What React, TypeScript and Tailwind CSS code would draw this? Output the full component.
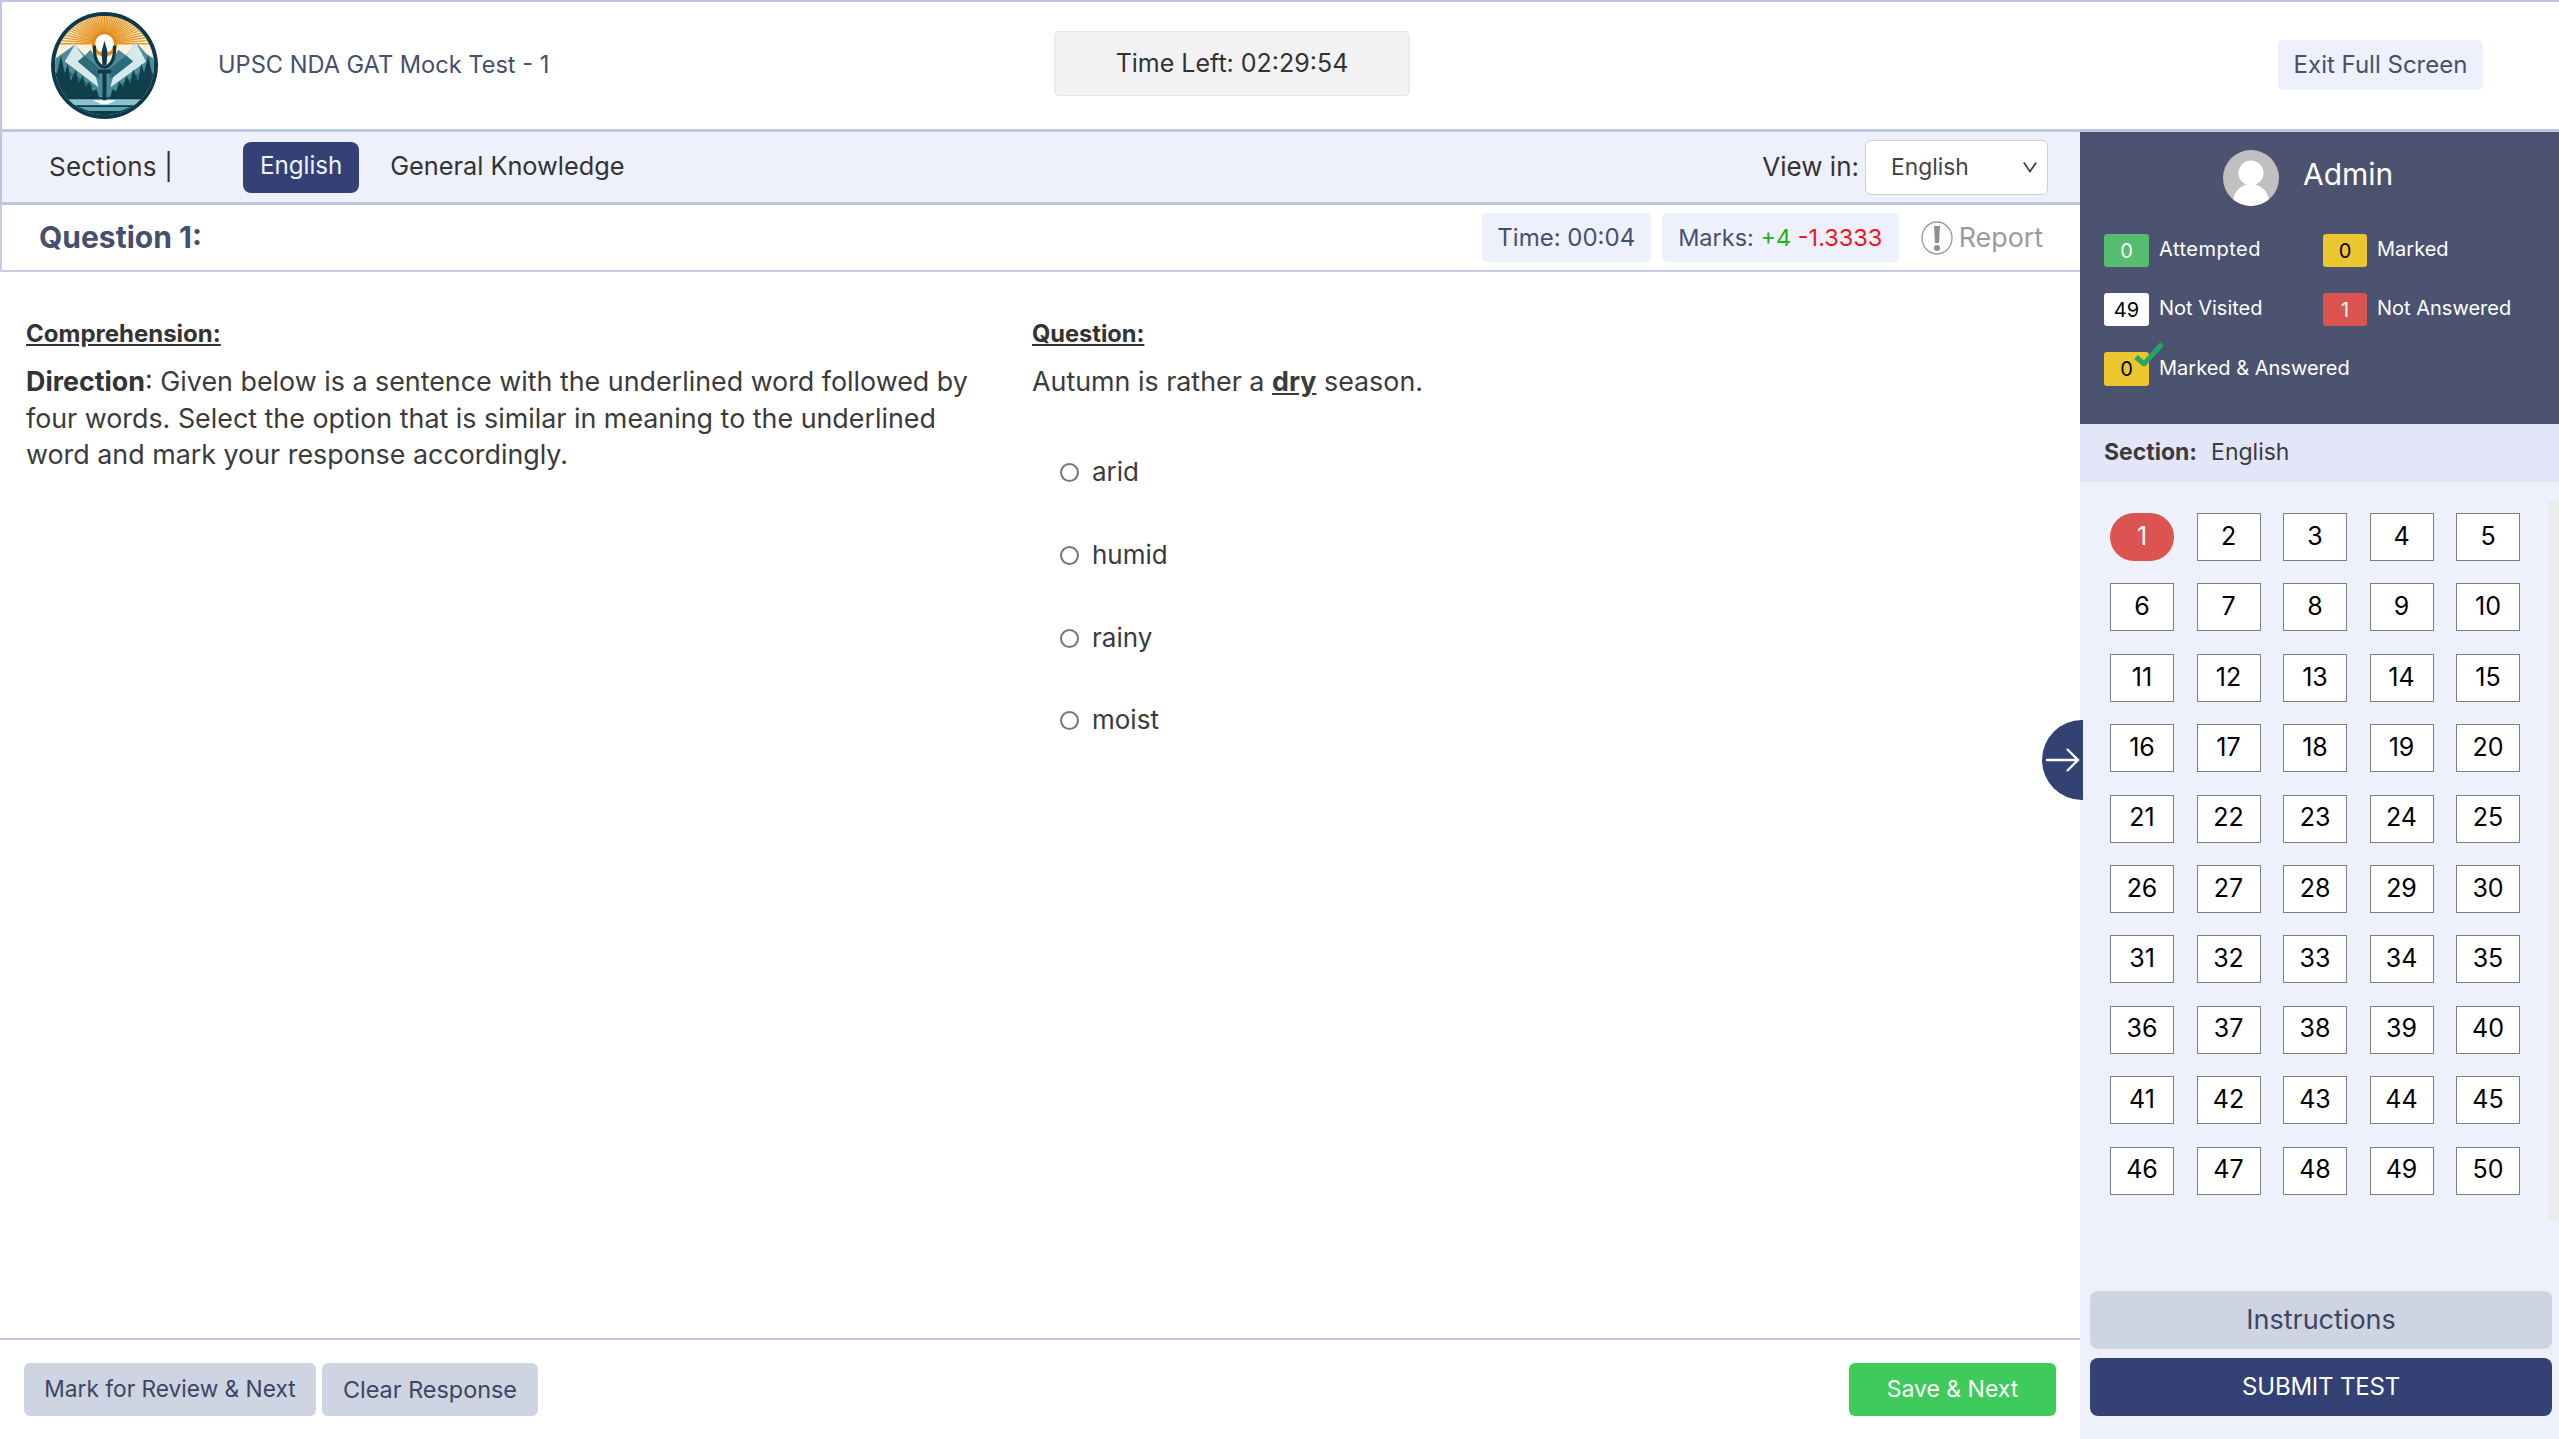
const font = "font-['Inter','Liberation_Sans',sans-serif]";

const legend = [
  { n: "0", label: "Attempted", cls: "bg-[#56bc6f] text-white", w: "w-[45px]", text: "tracking-[0.5px]" },
  { n: "0", label: "Marked", cls: "bg-[#ecc62f] text-black", w: "w-[44px]", text: "" },
  { n: "49", label: "Not Visited", cls: "bg-white text-black", w: "w-[45px]", text: "" },
  { n: "1", label: "Not Answered", cls: "bg-[#db5450] text-white", w: "w-[44px]", text: "" },
];

const numbers = Array.from({ length: 50 }, (_, i) => i + 1);

function Logo() {
  const rays = Array.from({ length: 45 }, (_, i) => (Math.PI * i) / 44);
  return (
    <svg viewBox="0 0 108 108" className="h-[107px] w-[107px] shrink-0">
      <defs>
        <clipPath id="logoClip">
          <circle cx="54" cy="54" r="50" />
        </clipPath>
      </defs>
      <circle cx="54" cy="54" r="54" fill="#0d3a4a" />
      <g clipPath="url(#logoClip)">
        <rect x="0" y="0" width="108" height="108" fill="#fbf1de" />
        {rays.map((a, i) => (
          <line
            key={i}
            x1={54 + 13 * Math.cos(a)}
            y1={32 - 13 * Math.sin(a)}
            x2={54 + 60 * Math.cos(a)}
            y2={32 - 60 * Math.sin(a)}
            stroke="#e8992b"
            strokeWidth="1.4"
          />
        ))}
        <path d="M0 50 L14 40 L24 33 L34 44 L40 38 L46 48 L54 60 L62 48 L68 38 L76 44 L86 31 L96 42 L108 50 V108 H0Z" fill="#4f8a98" />
        <path d="M24 33 L14 50 L48 76 L44 60Z M86 31 L96 50 L60 76 L64 60Z" fill="#d5e8ec" />
        <path d="M34 44 L27 50 L48 68 L50 58Z M76 44 L83 50 L60 68 L58 58Z M12 56 L44 76 L30 76Z M98 56 L66 76 L80 76Z" fill="#2c6b7a" />
        <circle cx="54" cy="32" r="13" fill="#e38a1e" />
        <circle cx="54" cy="32" r="9.5" fill="#fff" />
        <path
          d="M0 92 V56 L6 62 L10 44 L14 62 L17 52 L20 70 L25 58 L28 72 L32 64 L35 76 L39 70 L42 80 L46 78 L49 88 H59 L62 78 L66 80 L69 70 L73 76 L76 64 L80 72 L83 58 L88 70 L91 52 L94 62 L98 44 L102 62 L108 56 V92Z"
          fill="#0f3f4a"
        />
        <rect x="0" y="86" width="108" height="22" fill="#0d3a4a" />
        <path d="M14 88 H94 L84 94 H24Z" fill="#8cc4ce" />
        <path d="M28 96 H80 L70 100 H38Z" fill="#5fa3b1" />
        <path d="M42 89 H66 L57 93 H51Z" fill="#ffffff" />
        <rect x="52" y="58" width="4" height="31" fill="#0d3a4a" />
        <rect x="47" y="58" width="14" height="4" rx="2" fill="#0d3a4a" />
        <path d="M54 29 L57 40 L56 54 H52 L51 40Z" fill="#0d3a4a" />
        <path d="M44 34 C43 46 47 54 54 56 C61 54 65 46 64 34" fill="none" stroke="#0d3a4a" strokeWidth="3.2" />
      </g>
    </svg>
  );
}

function Avatar() {
  return (
    <svg viewBox="0 0 56 56" className="h-14 w-14 shrink-0">
      <defs>
        <clipPath id="avatarClip">
          <circle cx="28" cy="28" r="28" />
        </clipPath>
      </defs>
      <circle cx="28" cy="28" r="28" fill="#c0c0c0" />
      <g clipPath="url(#avatarClip)">
        <circle cx="28" cy="23" r="12.5" fill="#fff" />
        <ellipse cx="28" cy="52" rx="18" ry="18" fill="#fff" />
      </g>
    </svg>
  );
}

function Radio({ label, top }: { label: string; top: string }) {
  return (
    <div className={`flex h-[30px] items-center ${top}`}>
      <span className="h-[19px] w-[19px] rounded-full border-2 border-[#767676] bg-white" />
      <span className="ml-[13px] text-[26px]">{label}</span>
    </div>
  );
}

export default function App() {
  return (
    <div className={`flex h-[1439px] w-[2559px] flex-col overflow-hidden bg-white text-[#3b3b3b] ${font}`}>
      {/* top bar */}
      <header className="relative flex h-[132px] shrink-0 items-center border-b-[3px] border-l-2 border-t-2 border-[#bcc6e0] bg-white">
        <div className="ml-[49px]">
          <Logo />
        </div>
        <span className="ml-[60px] pb-[2px] text-[23.6px] text-[#45506f]">UPSC NDA GAT Mock Test - 1</span>
        <div className="absolute left-[1052px] top-[29px] flex h-[65px] w-[356px] items-center justify-center rounded-[5px] border border-[#e6e6e6] bg-[#f2f2f2] text-[25px] text-[#333]">
          Time Left: 02:29:54
        </div>
        <button className="absolute left-[2276px] top-[38px] flex h-[50px] w-[205px] items-center justify-center rounded-[5px] bg-[#eef1fb] text-[24px] text-[#45506f]">
          Exit Full Screen
        </button>
      </header>

      <div className="flex min-h-0 flex-1">
        {/* main column */}
        <main className="relative flex w-[2080px] shrink-0 flex-col">
          <div className="flex h-[73px] shrink-0 items-center border-b-[3px] border-l-2 border-[#bcc6e0] bg-[#eef1fb] pr-[32px]">
            <span className="ml-[47px] pb-[2px] text-[26px] tracking-[0.2px] text-[#333]">Sections |</span>
            <button className="ml-[70px] flex h-[51px] w-[116px] items-center justify-center rounded-[8px] bg-[#334174] pb-[2px] text-[24.2px] text-[#eef1fb]">
              English
            </button>
            <span className="ml-[31px] pb-[2px] text-[25.3px] text-[#333]">General Knowledge</span>
            <span className="ml-auto pb-[2px] text-[26px] text-[#333]">View in:</span>
            <div className="ml-[6px] flex h-[55px] w-[183px] items-center justify-between rounded-[6px] border border-[#cfcfcf] bg-white pl-[25px] pr-[8px] text-[22.8px] text-[#444]">
              English
              <svg viewBox="0 0 16 16" className="h-[18px] w-[18px]" fill="none" stroke="#444" strokeWidth="1.6">
                <path d="M2.5 4l5.5 8 5.5-8" />
              </svg>
            </div>
          </div>

          <div className="flex h-[67px] shrink-0 items-center border-b-2 border-l-2 border-[#c5cde3] pr-[37px]">
            <span className="ml-[37px] text-[30px] font-bold text-[#45506f]">Question 1:</span>
            <div className="ml-auto flex h-[49px] w-[169px] items-center justify-center rounded-[5px] bg-[#eef1fb] text-[24px] text-[#45506f]">
              Time: 00:04
            </div>
            <div className="ml-[11px] flex h-[49px] w-[237px] items-center justify-center rounded-[5px] bg-[#eef1fb] text-[23.5px] text-[#45506f]">
              Marks:&nbsp;<span className="text-[#22b41e]">+4</span>&nbsp;<span className="text-[#f5141e]">-1.3333</span>
            </div>
            <svg viewBox="0 0 32 34" className="ml-[22px] h-[34px] w-[32px]">
              <ellipse cx="16" cy="17" rx="15" ry="16" fill="#fff" stroke="#9a9a9a" strokeWidth="1.3" />
              <path d="M13 5h6l-1 17h-4z" fill="#8e8e8e" />
              <circle cx="16" cy="27" r="3" fill="#8e8e8e" />
            </svg>
            <span className="ml-[6px] text-[26.8px] text-[#9a9a9a]">Report</span>
          </div>

          <section className="flex min-h-0 flex-1 text-[26.85px] leading-[36.5px]">
            <div className="w-[1032px] shrink-0 pl-[26px] pt-[47px]">
              <div className="text-[24px] font-bold leading-[30px] text-[#333] underline">Comprehension:</div>
              <p className="mt-[14px] w-[955px]">
                <strong className="text-[#333]">Direction</strong>: Given below is a sentence with the underlined word followed by four words. Select the option that is similar in meaning to the underlined word and mark your response accordingly.
              </p>
            </div>
            <div className="pt-[47px]">
              <div className="text-[23.6px] font-bold leading-[30px] text-[#333] underline">Question:</div>
              <p className="mt-[14px]">
                Autumn is rather a <strong className="underline">dry</strong> season.
              </p>
              <div className="ml-[28px] mt-[58px]">
                <Radio label="arid" top="" />
                <Radio label="humid" top="mt-[53px]" />
                <Radio label="rainy" top="mt-[53px]" />
                <Radio label="moist" top="mt-[52px]" />
              </div>
            </div>
          </section>

          <footer className="flex h-[101px] shrink-0 items-start justify-between border-t-2 border-[#c5c8e8] pl-[24px] pr-[24px] pt-[23px]">
            <div className="flex gap-[6px]">
              <button className="flex h-[53px] w-[292px] items-center justify-center rounded-[6px] bg-[#cfd4e2] text-[22.7px] text-[#3c4563]">
                Mark for Review &amp; Next
              </button>
              <button className="flex h-[53px] w-[216px] items-center justify-center rounded-[6px] bg-[#cfd4e2] text-[23.4px] text-[#3c4563]">
                Clear Response
              </button>
            </div>
            <button className="flex h-[53px] w-[207px] items-center justify-center rounded-[6px] bg-[#3fcb5b] text-[23px] text-white">
              Save &amp; Next
            </button>
          </footer>

          {/* collapse toggle sits over the sidebar edge */}
          <button className="absolute left-[2042px] top-[588px] z-10 flex h-[80px] w-[41px] items-center justify-end rounded-l-full bg-[#334174] pr-[3px]">
            <svg viewBox="0 0 34 26" className="h-[26px] w-[34px]" fill="none" stroke="#fff" strokeWidth="2.4">
              <path d="M0 13h32M21 2l11 11-11 11" />
            </svg>
          </button>
        </main>

        {/* right sidebar */}
        <aside className="relative flex min-w-0 flex-1 flex-col bg-[#eef1fb]">
          <div className="h-[292px] shrink-0 bg-[#4b5370] pl-[24px] pt-[18px] text-white">
            <div className="ml-[119px] flex h-[56px] items-center">
              <Avatar />
              <span className="ml-[24px] pb-[7px] text-[30px]">Admin</span>
            </div>
            <div className="mt-[28px] grid grid-cols-[219px_1fr] gap-y-[26px]">
              {legend.map((item) => (
                <div key={item.label} className="flex h-[33px] items-center">
                  <span className={`flex h-[33px] items-center justify-center rounded-[3px] text-[20px] ${item.w} ${item.cls}`}>
                    {item.n}
                  </span>
                  <span className={`ml-[10px] pb-[3px] text-[20px] ${item.text}`}>{item.label}</span>
                </div>
              ))}
              <div className="relative col-span-2 flex h-[34px] items-center">
                <span className="flex h-[34px] w-[45px] items-center justify-center rounded-[3px] bg-[#ecc62f] text-[20px] text-black">0</span>
                <span className="ml-[10px] pb-[3px] text-[20px]">Marked &amp; Answered</span>
                <svg viewBox="0 0 30 24" className="absolute left-[30px] top-[-10px] h-[24px] w-[30px]" fill="none" stroke="#22a866" strokeWidth="5">
                  <path d="M2 15l8 7L28 2" />
                </svg>
              </div>
            </div>
          </div>

          <div className="flex h-[58px] shrink-0 items-center bg-[#e3e5f8] pb-[2px] pl-[24px] text-[23px] text-[#3b3b3b]">
            <strong>Section:</strong>
            <span className="ml-[14px]">English</span>
          </div>

          <div className="relative h-[739px] shrink-0 pl-[30px] pt-[31px]">
            <div className="grid w-[410px] grid-cols-5 gap-x-[22.5px] gap-y-[22.4px]">
              {numbers.map((n) =>
                n === 1 ? (
                  <button key={n} className="flex h-[48px] w-[64px] items-center justify-center rounded-full bg-[#db5450] pb-[1px] text-[25px] text-white">
                    {n}
                  </button>
                ) : (
                  <button key={n} className="flex h-[48px] w-[64px] items-center justify-center border border-[#7f7f7f] bg-white pb-[1px] text-[25px] text-black">
                    {n}
                  </button>
                ),
              )}
            </div>
            <div className="absolute right-0 top-[19px] h-[720px] w-[11px] bg-[#ececec]" />
          </div>

          <div className="mt-[70px] flex flex-col gap-[9px] pl-[10px] pr-[7px]">
            <button className="flex h-[58px] items-center justify-center rounded-[8px] bg-[#cfd4e2] text-[27px] text-[#3c4563]">
              Instructions
            </button>
            <button className="flex h-[58px] items-center justify-center rounded-[8px] bg-[#334174] text-[24px] tracking-[-0.2px] text-white">
              SUBMIT TEST
            </button>
          </div>
        </aside>
      </div>
    </div>
  );
}
